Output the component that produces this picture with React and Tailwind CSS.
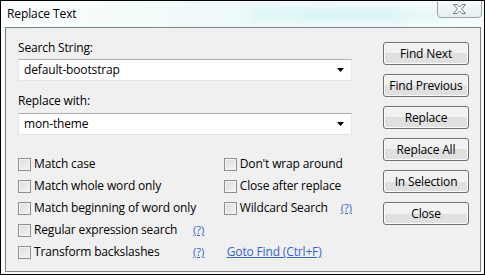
import React from 'react';

const font = { fontFamily: '"Open Sans", "Noto Sans", sans-serif' };

function Checkbox() {
    return (
        <span className="block w-[13px] h-[13px] shrink-0 border border-[#8e8f8f] bg-gradient-to-br from-[#dcdcdc] to-[#f4f4f4] shadow-[inset_0_0_0_1px_#f4f4f4]"></span>
    );
}

function CheckItem({ label }) {
    return (
        <div className="flex items-center gap-[3px] h-[22px]">
            <Checkbox />
            <span className="text-[12px] leading-4 text-black tracking-[-0.15px]">{label}</span>
        </div>
    );
}

function Help() {
    return <span className="text-[11px] leading-4 text-[#3366cc] underline">(?)</span>;
}

function Combo({ value }) {
    return (
        <div className="flex items-center h-[22px] w-[334px] bg-white border border-[#e3e5ea] border-t-[#acaeb4] pl-[5px] pr-[5px]">
            <span className="flex-1 text-[12px] leading-4 text-black tracking-[-0.15px]">{value}</span>
            <svg width="8" height="5" viewBox="0 0 8 5" className="mr-[1px]">
                <path d="M0 0 H7 L3.5 4 Z" fill="#000" />
            </svg>
        </div>
    );
}

function Button({ label }) {
    return (
        <button className="w-[86px] h-[23px] rounded-[3px] border border-[#707070] bg-gradient-to-b from-[#f2f2f2] from-50% to-[#e0e0e0] to-50% shadow-[inset_0_0_0_1px_#fcfcfc] text-[12px] leading-4 text-black tracking-[-0.15px]">
            {label}
        </button>
    );
}

export default function App() {
    return (
        <div className="w-[485px] h-[275px] border border-black bg-[#f7fbfc] flex flex-col overflow-hidden" style={font}>
            {/* Title bar */}
            <div className="relative h-[26px] flex items-center pl-[6px] bg-gradient-to-r from-[#fbfdfd] via-[#eef9f9] to-[#f6fbfb]">
                <span className="text-[12px] text-black tracking-[-0.1px]">Replace Text</span>
                <div className="absolute left-[250px] top-[10px] w-[150px] h-[8px] rounded-full bg-[#c6f0f2] blur-[5px] opacity-60"></div>
                <div className="absolute left-[300px] top-[10px] w-[150px] h-[8px] rounded-full bg-[#cdeff1] blur-[5px] opacity-50"></div>
                <div className="absolute right-[2px] top-[-1px] w-[45px] h-[18px] rounded-b-[4px] border border-[#9aa7ab] bg-gradient-to-b from-[#f7fbfb] to-[#e3eef0] flex items-center justify-center">
                    <svg width="15" height="12" viewBox="0 0 15 12">
                        <path d="M1.5 1.5 H5 L7.5 4 L10 1.5 H13.5 L9.5 6 L13.5 10.5 H10 L7.5 8 L5 10.5 H1.5 L5.5 6 Z" fill="#fff" stroke="#6f7b80" strokeWidth="1" />
                    </svg>
                </div>
            </div>

            {/* Client area */}
            <div className="flex-1 ml-[4px] mr-[3px] mb-[2px] border border-[#7b8286] bg-[#f0f0f0] flex pl-[12px] pt-[12px]">
                <div className="flex flex-col w-[334px]">
                    <div className="text-[12px] leading-4 text-black tracking-[-0.15px] mb-[3px]">Search String:</div>
                    <Combo value="default-bootstrap" />
                    <div className="text-[12px] leading-4 text-black tracking-[-0.15px] mt-[12px] mb-[4px]">Replace with:</div>
                    <Combo value="mon-theme" />

                    <div className="mt-[18px] flex">
                        <div className="w-[208px] flex flex-col">
                            <CheckItem label="Match case" />
                            <CheckItem label="Match whole word only" />
                            <CheckItem label="Match beginning of word only" />
                            <div className="flex items-center">
                                <div className="w-[175px]"><CheckItem label="Regular expression search" /></div>
                                <Help />
                            </div>
                            <div className="flex items-center">
                                <div className="w-[175px]"><CheckItem label="Transform backslashes" /></div>
                                <Help />
                            </div>
                        </div>
                        <div className="flex-1 flex flex-col">
                            <CheckItem label="Don't wrap around" />
                            <CheckItem label="Close after replace" />
                            <div className="flex items-center">
                                <div className="w-[117px]"><CheckItem label="Wildcard Search" /></div>
                                <Help />
                            </div>
                            <div className="h-[22px]"></div>
                            <div className="h-[22px] flex items-center pl-[3px]">
                                <span className="text-[12px] leading-4 text-[#3366cc] underline tracking-[-0.15px]">Goto Find (Ctrl+F)</span>
                            </div>
                        </div>
                    </div>
                </div>

                <div className="ml-[31px] pt-[2px] flex flex-col gap-[9px]">
                    <Button label="Find Next" />
                    <Button label="Find Previous" />
                    <Button label="Replace" />
                    <Button label="Replace All" />
                    <Button label="In Selection" />
                    <Button label="Close" />
                </div>
            </div>
        </div>
    );
}
